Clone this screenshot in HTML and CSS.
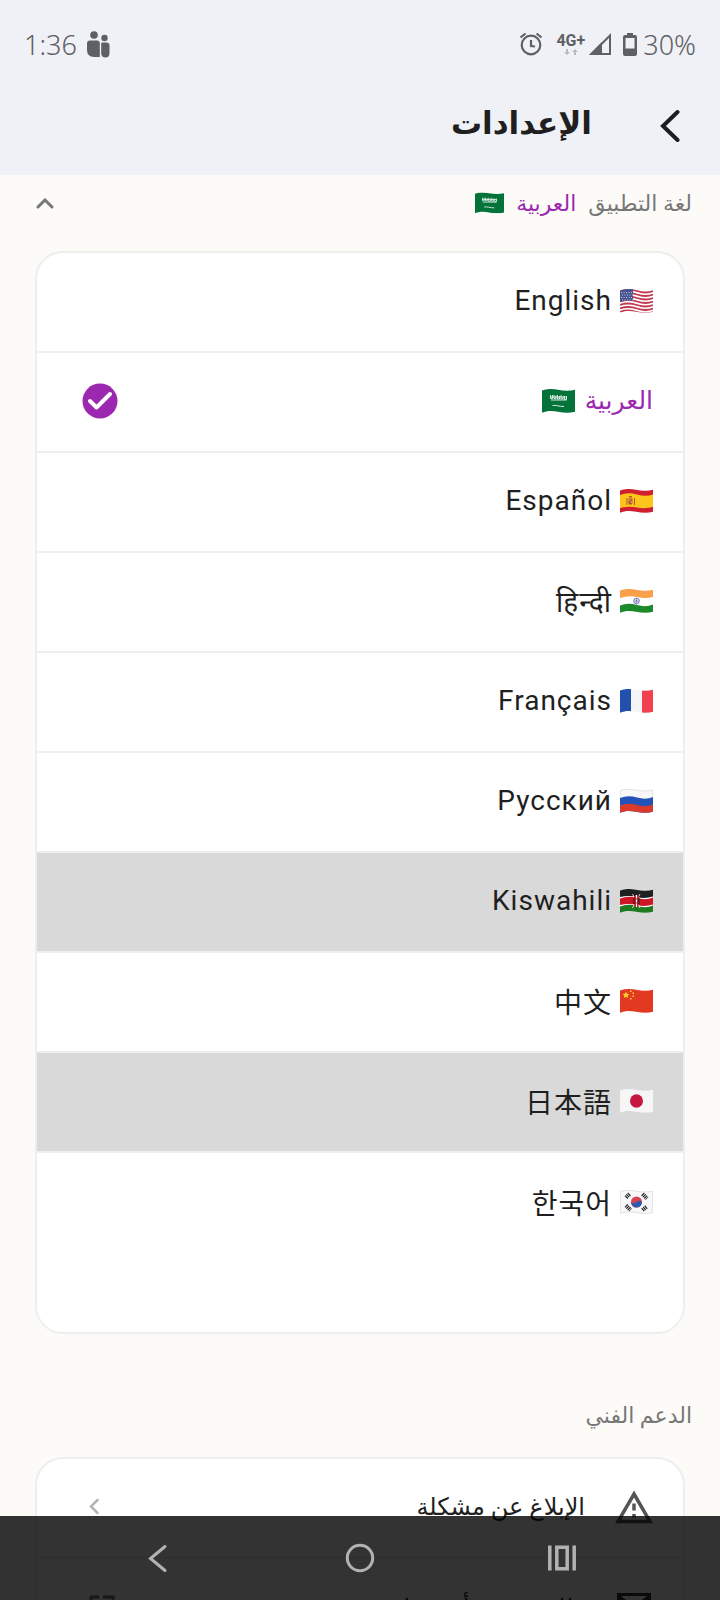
FILE: index.html
```html
<!DOCTYPE html>
<html lang="ar" dir="rtl">
<head>
  <meta charset="UTF-8">
  <meta name="viewport" content="width=device-width, initial-scale=1">
  <title>الإعدادات</title>
  <link rel="stylesheet" href="styles.css">
</head>
<body>
  <svg class="defs" aria-hidden="true">
    <defs>
      <clipPath id="wave">
        <path d="M0 1.500C5-.5 10-.3 16 .8S28 2 33 .8V22.700C28 24.300 22 24 16 22.800S5 21.700 0 23.800Z"/>
      </clipPath>
      <symbol id="flag-sa" viewBox="0 0 33 24">
        <g clip-path="url(#wave)">
          <path fill="#04733a" d="M0 0h33v24H0z"/>
          <path fill="none" stroke="#d7eadf" d="M8.500 6v3.500h2V6m1.500 0v3.500h2V6.500m1.500-.5v4h2V7m1.500-1v4h2V7m1.500 0v3.500h2V7M8.500 8h16M9 11h15.500"/>
          <path fill="none" stroke="#d7eadf" d="M10.500 16.500c4-.5 6 1 11.500 1"/>
        </g>
      </symbol>
    </defs>
  </svg>

  <div class="screen">
    <header class="header">
      <div class="status" dir="ltr">
        <span class="time">1:36</span>
        <svg class="family" viewBox="0 0 24 27" fill="#5f6065">
          <circle cx="8" cy="4" r="3.800"/>
          <circle cx="18.500" cy="7" r="3.200"/>
          <path d="M4 9.500H11Q13.800 9.500 13.800 12.500V26H8Q1 26 1 19V12.500Q1 9.500 4 9.500z"/>
          <path d="M16 11.500h4.500q3 0 3 3v7.500q0 4.500-4 4.500t-4.300-4V12q0-.5.8-.5z"/>
        </svg>
        <svg class="alarm" viewBox="0 0 24 24" fill="none" stroke="#5f6065" stroke-width="2.200">
          <circle cx="12" cy="13" r="9.300"/>
          <path d="M12 8v6l4 .5M1.500 5.500 6.500 1.500M22.500 5.500 17.500 1.500"/>
        </svg>
        <span class="network">
          <b>4G+</b>
          <svg viewBox="0 0 14 6" fill="#b9babf"><path d="M3 6 0 3h2V0h2v3h2zM11 0l3 3h-2v3h-2V3H8z"/></svg>
        </span>
        <svg class="signal" viewBox="0 0 22 22">
          <path fill="#5f6065" d="M0 22 13 9V22z"/>
          <path fill="none" stroke="#5f6065" stroke-width="2" d="M2.500 21 21 2.500V21z"/>
        </svg>
        <svg class="battery" viewBox="0 0 14 23">
          <path fill="#5f6065" d="M4 0h6v2h2q2 0 2 2v17q0 2-2 2H2q-2 0-2-2V4q0-2 2-2h2zM2.500 5v10.500h9V5z" fill-rule="evenodd"/>
        </svg>
        <span class="percent">30%</span>
      </div>
      <div class="title-bar">
        <button class="back" aria-label="رجوع">
          <svg viewBox="0 0 20 34" fill="none" stroke="#1d1e20" stroke-width="4" stroke-linecap="round"><path d="M17.500 3 3 17 17.500 31"/></svg>
        </button>
        <h1>الإعدادات</h1>
      </div>
    </header>

    <main class="content">
      <button class="section-head" aria-expanded="true">
        <span>لغة التطبيق</span>
        <span class="current">العربية</span>
        <svg class="flag small"><use href="#flag-sa"/></svg>
        <svg class="chevron-up" viewBox="0 0 18 11" fill="none" stroke="#777" stroke-width="3" stroke-linecap="round"><path d="M2 9 9 2 16 9"/></svg>
      </button>

      <div class="card languages">
        <label class="row">
          <svg class="flag" viewBox="0 0 33 24"><g clip-path="url(#wave)">
            <path fill="#fff" d="M0 0h33v24H0z"/>
            <path fill="none" stroke="#c33a50" stroke-width="1.800" d="M0 2q8-3 17 0t16 0M0 5.500q8-3 17 0t16 0M0 9q8-3 17 0t16 0M0 12.500q8-3 17 0t16 0M0 16q8-3 17 0t16 0M0 19.500q8-3 17 0t16 0M0 23q8-3 17 0t16 0"/>
            <path fill="#48548f" d="M0 0h13v12q-6-1-13 1z"/>
            <path stroke="#c6cbe2" stroke-dasharray="1 1.500" d="M1 3.500h11M2 6h11M1 8.500h11M2 11h11"/>
          </g></svg>
          <span class="name" dir="ltr" lang="en">English</span>
          <input type="radio" name="language">
        </label>
        <label class="row selected">
          <span class="name">العربية</span>
          <svg class="flag"><use href="#flag-sa"/></svg>
          <input type="radio" name="language" checked>
          <svg class="check" viewBox="0 0 36 36"><circle cx="18" cy="18" r="17.500" fill="#9c27b0"/><path d="M8 18 14.500 24.500 28 11" fill="none" stroke="#fff" stroke-width="4" stroke-linecap="round" stroke-linejoin="round"/></svg>
        </label>
        <label class="row">
          <svg class="flag" viewBox="0 0 33 24"><g clip-path="url(#wave)">
            <path fill="#d0202f" d="M0 0h33v24H0z"/>
            <path fill="#fdc51c" d="M0 6q8-3 17-.5T33 5.500V18q-8 2-16 .5T0 19z"/>
            <path fill="#b4572a" d="M6.500 9h1v7h-1zM14 9h1v7h-1zM8.500 9.500h4v5q-2 2.500-4 0zM9 7h3v1.500H9z"/>
            <path fill="#e9b98a" d="M9.500 10.500h1v1.500h-1zM11 12.500h1V14h-1z"/>
          </g></svg>
          <span class="name" dir="ltr" lang="es">Español</span>
          <input type="radio" name="language">
        </label>
        <label class="row">
          <svg class="flag" viewBox="0 0 33 24"><g clip-path="url(#wave)">
            <path fill="#fff" d="M0 0h33v24H0z"/>
            <path fill="#faa04a" d="M0 0h33v8q-8 2-16 0T0 9z"/>
            <path fill="#1c8a2b" d="M0 16.500q8-3 17-.5t16-.5V24H0z"/>
            <circle cx="16.500" cy="12" r="2.800" fill="none" stroke="#5a5fa8" stroke-width=".8"/>
            <path stroke="#5a5fa8" stroke-width=".5" d="M13.700 12h5.600M16.500 9.200v5.600M14.500 10l4 4M18.500 10l-4 4"/>
          </g></svg>
          <span class="name" dir="ltr" lang="hi">हिन्दी</span>
          <input type="radio" name="language">
        </label>
        <label class="row">
          <svg class="flag" viewBox="0 0 33 24"><g clip-path="url(#wave)">
            <path fill="#f4f5f7" d="M0 0h33v24H0z"/>
            <path fill="#2450ad" d="M0 0h11v24H0z"/>
            <path fill="#f3404f" d="M22 0h11v24H22z"/>
          </g></svg>
          <span class="name" dir="ltr" lang="fr">Français</span>
          <input type="radio" name="language">
        </label>
        <label class="row">
          <svg class="flag" viewBox="0 0 33 24">
            <g clip-path="url(#wave)">
              <path fill="#f8f8f9" d="M0 0h33v24H0z"/>
              <path fill="#2352b8" d="M0 9q8-3 17-.5t16-.5V24H0z"/>
              <path fill="#da3a2c" d="M0 16.500q8-3 17-.5t16-.5V24H0z"/>
            </g>
            <path fill="none" stroke="#d0d1dc" stroke-width=".6" d="M.3 9V1.500C5-.2 10 0 16 1.100S28 2.300 32.700 1.100V8"/>
          </svg>
          <span class="name" dir="ltr" lang="ru">Русский</span>
          <input type="radio" name="language">
        </label>
        <label class="row pressed">
          <svg class="flag" viewBox="0 0 33 24"><g clip-path="url(#wave)">
            <path fill="#fff" d="M0 0h33v24H0z"/>
            <path fill="#1f2022" d="M0 0h33v7.500q-8 2.500-16 .5T0 8z"/>
            <path fill="#cf1626" d="M0 9.500q8-3 17-.5t16-.5V15.500q-8 2.500-16 .5T0 16z"/>
            <path fill="#1f7a22" d="M0 17.500q8-3 17-.5t16-.5V24H0z"/>
            <path stroke="#fff" stroke-width=".8" d="M12.500 5 20 19M20 5 12.500 19"/>
            <ellipse cx="16.500" cy="12" rx="3" ry="6.500" fill="#b31321"/>
            <path stroke="#fff" stroke-width="1.200" d="M16.500 6v3.500M16.500 10.500v3M16.500 14.500V18"/>
            <path stroke="#1f2022" d="M14 9v6M19 9v6"/>
          </g></svg>
          <span class="name" dir="ltr" lang="sw">Kiswahili</span>
          <input type="radio" name="language">
        </label>
        <label class="row">
          <svg class="flag" viewBox="0 0 33 24"><g clip-path="url(#wave)">
            <path fill="#e23a22" d="M0 0h33v24H0z"/>
            <path fill="#fbd431" d="m6 2.500 1 2.300 2.500.2-1.900 1.600.6 2.400L6 7.700 3.800 9l.6-2.400L2.500 5l2.500-.2zM10 1.500h1.500V3H10zM12.500 3.500H14V5h-1.500zM12.500 6.500H14V8h-1.500zM10 9h1.500v1.500H10z"/>
          </g></svg>
          <span class="name" dir="ltr" lang="zh">中文</span>
          <input type="radio" name="language">
        </label>
        <label class="row pressed">
          <svg class="flag" viewBox="0 0 33 24"><g clip-path="url(#wave)">
            <path fill="#f6f6f7" d="M0 0h33v24H0z"/>
            <ellipse cx="16.500" cy="12" rx="6.500" ry="6.800" fill="#c5173f"/>
          </g></svg>
          <span class="name" dir="ltr" lang="ja">日本語</span>
          <input type="radio" name="language">
        </label>
        <label class="row">
          <svg class="flag" viewBox="0 0 33 24">
            <g clip-path="url(#wave)">
              <path fill="#f8f8f9" d="M0 0h33v24H0z"/>
              <circle cx="16.500" cy="12" r="5.500" fill="#d8414f"/>
              <path fill="#2c5ab0" d="M11 12q2.700 2.500 5.500 0t5.500 0a5.500 5.500 0 0 1-11 0z"/>
              <path stroke="#222" stroke-width="4" stroke-dasharray="1.200 .7" d="M6 7.500 10 3.500M22.500 20 27 16.500M6 15.500l4.500 4.500M22.500 4l4.500 4.500"/>
            </g>
            <path fill="none" stroke="#d0d1d4" stroke-width=".6" d="M.3 1.500C5-.2 10 0 16 1.100S28 2.300 32.700 1.100V22.500C28 24 22 23.700 16 22.500S5 21.400 .3 23.500Z"/>
          </svg>
          <span class="name" dir="ltr" lang="ko">한국어</span>
          <input type="radio" name="language">
        </label>
      </div>

      <h2>الدعم الفني</h2>

      <div class="card">
        <a class="row link" href="#report">
          <svg class="icon" viewBox="0 0 38 34"><path fill="none" stroke="#555" stroke-width="3.500" d="M19 4 35 31.500H3z"/><path stroke="#555" stroke-width="3.500" d="M19 13.500v7M19 24v3.500"/></svg>
          <span>الإبلاغ عن مشكلة</span>
          <svg class="chevron" viewBox="0 0 10 17" fill="none" stroke="#b5b5b5" stroke-width="2.500" stroke-linecap="round"><path d="M8.500 2 2 8.500 8.500 15"/></svg>
        </a>
        <a class="row link" href="#help">
          <svg class="icon" viewBox="0 0 38 34"><path fill="none" stroke="#333" stroke-width="3" d="M3.500 3.500h31v27h-31zM3.500 5 19 17 34.500 5"/></svg>
          <span>طلب خدمة أو مساعدة</span>
          <svg class="external" viewBox="0 0 26 26" fill="none" stroke="#777" stroke-width="3"><path d="M10 2H2v22h22V16M14 2h10v9"/></svg>
        </a>
      </div>
    </main>

    <nav class="system-nav" dir="ltr">
      <button aria-label="رجوع"><svg viewBox="0 0 30 30" fill="none" stroke="#b2b2b2" stroke-width="3" stroke-linecap="round"><path d="M22 3.500 7.500 15.500 22 27.500"/></svg></button>
      <button aria-label="الشاشة الرئيسية"><svg viewBox="0 0 30 30" fill="none" stroke="#b2b2b2" stroke-width="3"><circle cx="15" cy="15" r="12.700"/></svg></button>
      <button aria-label="التطبيقات الأخيرة"><svg viewBox="0 0 30 30" fill="none" stroke="#b2b2b2" stroke-width="3.500"><path d="M2.800 2.500v25M27.200 2.500v25M9.800 4.200h10.400v21.600H9.800z"/></svg></button>
    </nav>
  </div>
</body>
</html>
```
FILE: styles.css
```css
* {
  box-sizing: border-box;
}
body {
  margin: 0;
  font-family: Roboto, "Noto Sans", "DejaVu Sans", "Noto Sans CJK SC", sans-serif;
  font-size: 28px;
  color: #1f1f1f;
  background: #fcfbf7;
}
button {
  border: none;
  padding: 0;
  background: none;
  font: inherit;
  color: inherit;
  cursor: pointer;
}
svg {
  flex: none;
}
.defs {
  position: absolute;
  width: 0;
  height: 0;
}
.screen {
  height: 100vh;
  display: flex;
  flex-direction: column;
  overflow: hidden;
}
.header {
  flex: none;
  background: #f0f1f6;
}
.status {
  display: flex;
  align-items: center;
  height: 88px;
  padding: 0 24px;
  font-family: "Noto Sans", sans-serif;
  font-weight: 300;
  font-size: 27px;
  color: #5f6065;
}
.family {
  width: 24px;
  height: 27px;
  margin-left: 9px;
  margin-right: auto;
}
.alarm {
  width: 24px;
  height: 24px;
  margin-right: 13px;
}
.network {
  display: flex;
  flex-direction: column;
  align-items: center;
  font-family: Roboto, sans-serif;
  font-size: 16px;
  line-height: 16px;
}
.network b {
  font-weight: 700;
}
.network svg {
  width: 14px;
  height: 6px;
}
.signal {
  width: 22px;
  height: 22px;
  margin-left: 4px;
}
.battery {
  width: 14px;
  height: 23px;
  margin-left: 12px;
  margin-right: 6px;
}
.title-bar {
  display: flex;
  align-items: center;
  gap: 68px;
  height: 87px;
  padding: 0 40px 12px;
}
.back svg {
  display: block;
  width: 20px;
  height: 34px;
}
h1 {
  margin: 0;
  padding-bottom: 4px;
  font-size: 31px;
  font-weight: bold;
}
.content {
  flex: 1;
  overflow: hidden;
}
.section-head {
  display: flex;
  align-items: center;
  gap: 12px;
  width: 100%;
  height: 56px;
  padding: 0 28px 0 36px;
  font-size: 22px;
  color: #777;
}
.current {
  color: #9c27b0;
}
.chevron-up {
  width: 18px;
  height: 11px;
  margin-right: auto;
}
.flag {
  width: 33px;
  height: 24px;
}
.flag.small {
  width: 29px;
  height: 22px;
}
.card {
  margin: 0 35px;
  border: 2px solid #eee;
  border-radius: 28px;
  background: #fff;
  overflow: hidden;
}
.languages {
  margin-top: 20px;
  padding-bottom: 79px;
}
.row {
  display: flex;
  align-items: center;
  gap: 8px;
  height: 100px;
  padding: 0 30px 3px 45px;
  border-bottom: 2px solid #eee;
}
.row:last-child {
  border-bottom: none;
}
.pressed {
  background: #d9d9d9;
}
.selected {
  gap: 10px;
  font-size: 25px;
  color: #9c27b0;
}
.name {
  letter-spacing: 1px;
}
.selected .name {
  letter-spacing: normal;
}
.row input {
  appearance: none;
  width: 0;
  height: 0;
  margin: 0;
}
.check {
  width: 36px;
  height: 36px;
  margin-right: auto;
}
h2 {
  margin: 61px 28px 20px;
  font-size: 22px;
  line-height: 42px;
  font-weight: normal;
  color: #777;
}
.link {
  gap: 30px;
  padding: 0 30px 3px 52px;
  font-size: 24px;
  color: inherit;
  text-decoration: none;
}
.icon {
  width: 38px;
  height: 34px;
}
.chevron {
  width: 10px;
  height: 17px;
  margin-right: auto;
}
.external {
  width: 26px;
  height: 26px;
  margin-right: auto;
}
.system-nav {
  position: fixed;
  left: 0;
  right: 0;
  bottom: 0;
  display: flex;
  align-items: center;
  height: 84px;
  padding: 0 8%;
  background: rgba(0, 0, 0, 0.8);
}
.system-nav button {
  flex: 1;
}
.system-nav svg {
  display: block;
  width: 30px;
  height: 30px;
  margin: 0 auto;
}
```
